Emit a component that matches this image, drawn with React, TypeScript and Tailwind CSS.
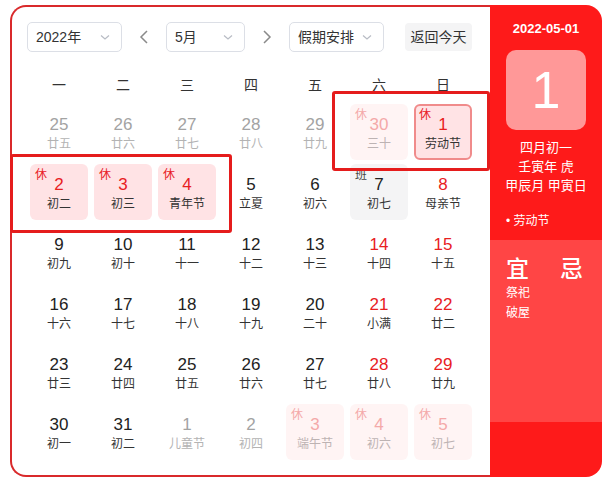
import React from 'react';

type Kind = 'other' | 'normal' | 'holiday' | 'faded' | 'work' | 'selected';

interface Day {
    d: number;
    l: string;
    kind: Kind;
    red?: boolean;
}

const n = (d: number, l: string, red = false): Day => ({ d, l, kind: 'normal', red });

const weeks: Day[][] = [
    [
        { d: 25, l: '廿五', kind: 'other' },
        { d: 26, l: '廿六', kind: 'other' },
        { d: 27, l: '廿七', kind: 'other' },
        { d: 28, l: '廿八', kind: 'other' },
        { d: 29, l: '廿九', kind: 'other' },
        { d: 30, l: '三十', kind: 'faded' },
        { d: 1, l: '劳动节', kind: 'selected' },
    ],
    [
        { d: 2, l: '初二', kind: 'holiday' },
        { d: 3, l: '初三', kind: 'holiday' },
        { d: 4, l: '青年节', kind: 'holiday' },
        n(5, '立夏'),
        n(6, '初六'),
        { d: 7, l: '初七', kind: 'work' },
        n(8, '母亲节', true),
    ],
    [n(9, '初九'), n(10, '初十'), n(11, '十一'), n(12, '十二'), n(13, '十三'), n(14, '十四', true), n(15, '十五', true)],
    [n(16, '十六'), n(17, '十七'), n(18, '十八'), n(19, '十九'), n(20, '二十'), n(21, '小满', true), n(22, '廿二', true)],
    [n(23, '廿三'), n(24, '廿四'), n(25, '廿五'), n(26, '廿六'), n(27, '廿七'), n(28, '廿八', true), n(29, '廿九', true)],
    [
        n(30, '初一'),
        n(31, '初二'),
        { d: 1, l: '儿童节', kind: 'other' },
        { d: 2, l: '初四', kind: 'other' },
        { d: 3, l: '端午节', kind: 'faded' },
        { d: 4, l: '初六', kind: 'faded' },
        { d: 5, l: '初七', kind: 'faded' },
    ],
];

const Chevron = () => (
    <svg width="12" height="12" viewBox="0 0 12 12" fill="none" stroke="#b8bcc4" strokeWidth="1.2">
        <polyline points="2,4.5 6,8 10,4.5" />
    </svg>
);

const Arrow = ({ dir }: { dir: 'l' | 'r' }) => (
    <svg width="10" height="16" viewBox="0 0 10 16" fill="none" stroke="#8a8a8a" strokeWidth="1.5">
        <polyline points={dir === 'l' ? '8,2 2,8 8,14' : '2,2 8,8 2,14'} />
    </svg>
);

const Select = ({ label, w }: { label: string; w: string }) => (
    <div className={`${w} h-[30px] flex items-center justify-between pl-[8px] pr-[10px] border border-[#dcdfe6] rounded-[5px] text-[14px] text-[#333]`}>
        <span>{label}</span>
        <Chevron />
    </div>
);

const Cell = ({ day }: { day: Day }) => {
    let box = '';
    let num = 'text-[#222]';
    let lunar = 'text-[#333]';
    let badge: string | null = null;
    let badgeCls = 'text-[#e8201f]';

    if (day.kind === 'other') {
        num = 'text-[#a3a3a3]';
        lunar = 'text-[#b3b3b3]';
    } else if (day.kind === 'holiday') {
        box = 'bg-[#ffe3e5]';
        num = 'text-[#e8201f]';
        badge = '休';
    } else if (day.kind === 'selected') {
        box = 'bg-[#ffe3e5] border-2 border-[#f08b8b]';
        num = 'text-[#e8201f]';
        badge = '休';
    } else if (day.kind === 'faded') {
        box = 'bg-[#fff4f4]';
        num = 'text-[#f4a9a9]';
        lunar = 'text-[#bdb3b3]';
        badge = '休';
        badgeCls = 'text-[#f4a9a9]';
    } else if (day.kind === 'work') {
        box = 'bg-[#f4f4f5]';
        badge = '班';
        badgeCls = 'text-[#444]';
    }
    if (day.red) num = 'text-[#e8201f]';

    return (
        <div className="h-[60px] flex items-center justify-center">
            <div className={`relative w-[58px] h-[56px] rounded-[6px] flex flex-col items-center ${box} ${day.kind === 'selected' ? 'pt-[9px]' : 'pt-[11px]'}`}>
                {badge && (
                    <span className={`absolute ${day.kind === 'selected' ? 'left-[3px] top-[2px]' : 'left-[5px] top-[4px]'} text-[12px] leading-[14px] ${badgeCls}`}>
                        {badge}
                    </span>
                )}
                <span className={`text-[17px] leading-[20px] ${num}`}>{day.d}</span>
                <span className={`mt-[1px] text-[12px] leading-[16px] ${lunar}`}>{day.l}</span>
            </div>
        </div>
    );
};

export default function App() {
    return (
        <div
            className="relative w-[613px] h-[487px] bg-white overflow-hidden pt-[5px] pl-[10px]"
            style={{ fontFamily: '"Liberation Sans", "Noto Sans CJK SC", sans-serif' }}
        >
            <div className="flex w-[592px] h-[472px]">
                <div className="w-[480px] h-full border-l-2 border-t-2 border-b-2 border-[#d9292b] rounded-l-[16px] pl-[15px] pr-[13px] pt-[15px] bg-white">
                    <div className="flex items-center h-[30px]">
                        <Select label="2022年" w="w-[95px]" />
                        <div className="w-[44px] flex justify-center"><Arrow dir="l" /></div>
                        <Select label="5月" w="w-[79px]" />
                        <div className="w-[44px] flex justify-center"><Arrow dir="r" /></div>
                        <Select label="假期安排" w="w-[95px]" />
                        <div className="ml-[21px] w-[67px] h-[28px] flex items-center justify-center bg-[#f4f4f5] rounded-[4px] text-[14px] text-[#333]">
                            返回今天
                        </div>
                    </div>
                    <div className="mt-[18px] grid grid-cols-7 w-[448px] h-[30px] items-center text-[14px] text-[#333]">
                        {['一', '二', '三', '四', '五', '六', '日'].map(w => (
                            <div key={w} className="text-center">{w}</div>
                        ))}
                    </div>
                    <div className="mt-[2px] grid grid-cols-7 w-[448px]">
                        {weeks.flat().map((day, i) => (
                            <Cell key={i} day={day} />
                        ))}
                    </div>
                </div>

                <div className="w-[112px] h-full bg-[#fe1a1a] rounded-r-[16px] overflow-hidden flex flex-col text-white">
                    <div className="pt-[15px] h-[33px] text-center text-[13px] leading-[18px] font-semibold">2022-05-01</div>
                    <div className="mt-[12px] mx-auto w-[80px] h-[80px] rounded-[10px] bg-[#ff9898] flex items-center justify-center text-[52px] leading-none">
                        1
                    </div>
                    <div className="mt-[8px] text-center text-[13px] leading-[19px]">
                        <div>四月初一</div>
                        <div>壬寅年 虎</div>
                        <div>甲辰月 甲寅日</div>
                    </div>
                    <div className="mt-[18px] pl-[16px] text-[12px] leading-[16px]">• 劳动节</div>
                    <div className="mt-[11px] h-[182px] bg-[#ff4545] pl-[16px] pt-[16px] flex">
                        <div className="w-[54px]">
                            <div className="text-[23px] leading-[26px] font-medium">宜</div>
                            <div className="mt-[1px] text-[12px] leading-[20px]">
                                <div>祭祀</div>
                                <div>破屋</div>
                            </div>
                        </div>
                        <div className="text-[23px] leading-[26px] font-medium">忌</div>
                    </div>
                </div>
            </div>

            <div className="absolute left-[332px] top-[91px] w-[158px] h-[80px] border-[3px] border-[#e51c1c] rounded-[3px]" />
            <div className="absolute left-[10px] top-[154px] w-[222px] h-[79px] border-[3px] border-[#e51c1c] rounded-[3px]" />
        </div>
    );
}
